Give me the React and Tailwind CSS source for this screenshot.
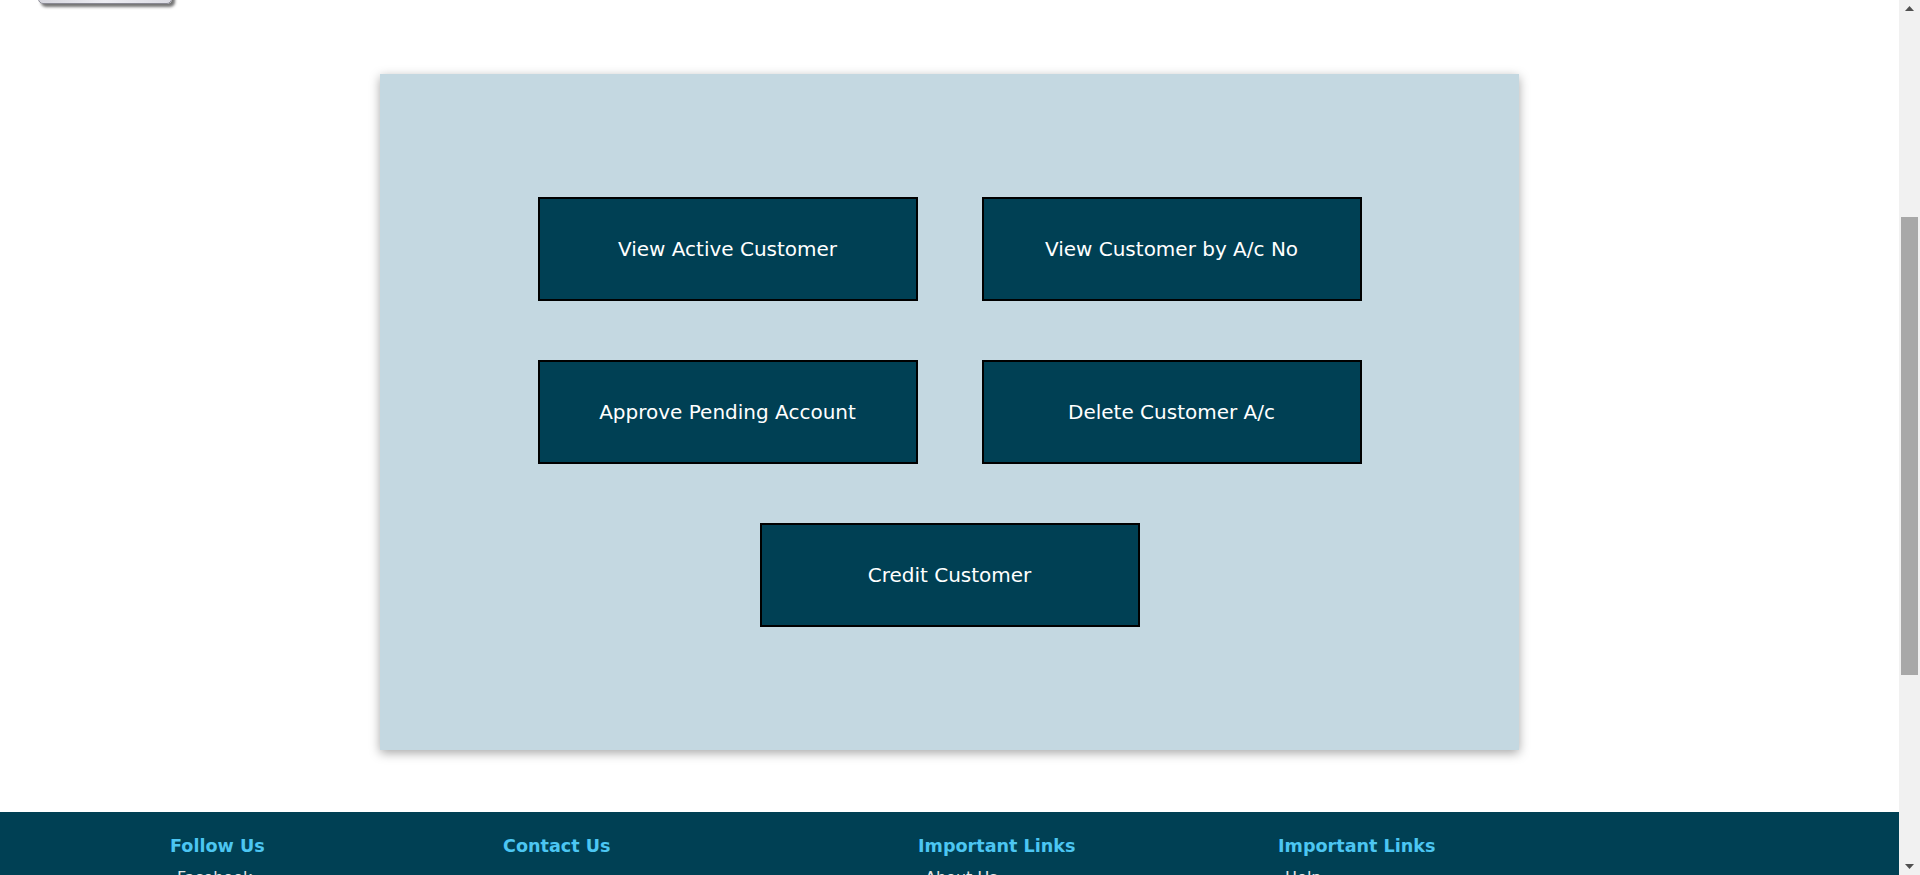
import React, { useLayoutEffect, useEffect } from "react";

const font = { fontFamily: '"DejaVu Sans", Verdana, sans-serif' };

function ActionButton({ children }) {
  return (
    <button
      type="button"
      className="w-[380px] h-[104px] bg-[#004054] border-2 border-black text-white text-[20px] flex items-center justify-center"
    >
      {children}
    </button>
  );
}

function FooterCol({ title, items, gap = "mt-[9px]" }) {
  return (
    <div>
      <h3 className="text-[17.6px] leading-[22px] font-bold text-[#4cc6f2]">{title}</h3>
      <ul className={`${gap} pl-[7px] flex flex-col gap-2`}>
        {items.map((it) => (
          <li key={it} className="text-[16px] leading-[24px] text-[#e6e6e6]">
            {it}
          </li>
        ))}
      </ul>
    </div>
  );
}

function FakeScrollbar() {
  return (
    <div className="fixed top-0 right-0 w-[21px] h-screen bg-[#f1f1f1] flex flex-col items-center">
      <div className="h-[17px] w-full flex items-center justify-center">
        <svg width="9" height="5" viewBox="0 0 9 5">
          <path d="M0 5 L4.5 0 L9 5 Z" fill="#505050" />
        </svg>
      </div>
      <div className="flex-1 w-full pt-[200px] flex justify-center">
        <div className="w-[17px] h-[458px] bg-[#a8a8a8]" />
      </div>
      <div className="h-[17px] w-full flex items-center justify-center">
        <svg width="9" height="5" viewBox="0 0 9 5">
          <path d="M0 0 L4.5 5 L9 0 Z" fill="#505050" />
        </svg>
      </div>
    </div>
  );
}

export default function App() {
  useLayoutEffect(() => {
    window.scrollTo(0, 382);
  }, []);
  useEffect(() => {
    window.scrollTo(0, 382);
    const t = setTimeout(() => window.scrollTo(0, 382), 50);
    return () => clearTimeout(t);
  }, []);

  return (
    <div className="bg-white min-h-[1607px] flex flex-col" style={font}>
      {/* header */}
      <div className="h-[386px] flex items-end pl-[38px]">
        <button
          type="button"
          aria-label="Back"
          className="w-[134px] h-[40px] rounded-[5px] border border-[#8a8a94] bg-gradient-to-r from-[#d6d6de] via-[#ececf2] to-[#dcdce4] shadow-[3px_3px_3px_rgba(0,0,0,0.55)]"
        />
      </div>

      {/* card */}
      <div className="mt-[70px] ml-[380px] w-[1139px] h-[676px] bg-[#c4d8e1] shadow-[0_3px_10px_rgba(0,0,0,0.35)] pt-[123px] flex flex-col items-center gap-[59px]">
        <div className="flex gap-[64px]">
          <ActionButton>View Active Customer</ActionButton>
          <ActionButton>View Customer by A/c No</ActionButton>
        </div>
        <div className="flex gap-[64px]">
          <ActionButton>Approve Pending Account</ActionButton>
          <ActionButton>Delete Customer A/c</ActionButton>
        </div>
        <div className="flex">
          <ActionButton>Credit Customer</ActionButton>
        </div>
      </div>

      {/* footer */}
      <footer className="mt-[62px] flex-1 bg-[#004054] pt-[23px] pl-[170px] grid grid-cols-[333px_415px_360px_1fr]">
        <FooterCol title="Follow Us" items={["Facebook", "Twitter", "Instagram", "LinkedIn"]} />
        <FooterCol
          title="Contact Us"
          gap="mt-[24px]"
          items={["+91 98765 43210", "support@bank.com", "Mumbai, India"]}
        />
        <FooterCol title="Important Links" items={["About Us", "Services", "Careers", "Privacy Policy"]} />
        <FooterCol title="Important Links" items={["Help", "FAQ", "Terms of Use", "Feedback"]} />
      </footer>

      <FakeScrollbar />
    </div>
  );
}
